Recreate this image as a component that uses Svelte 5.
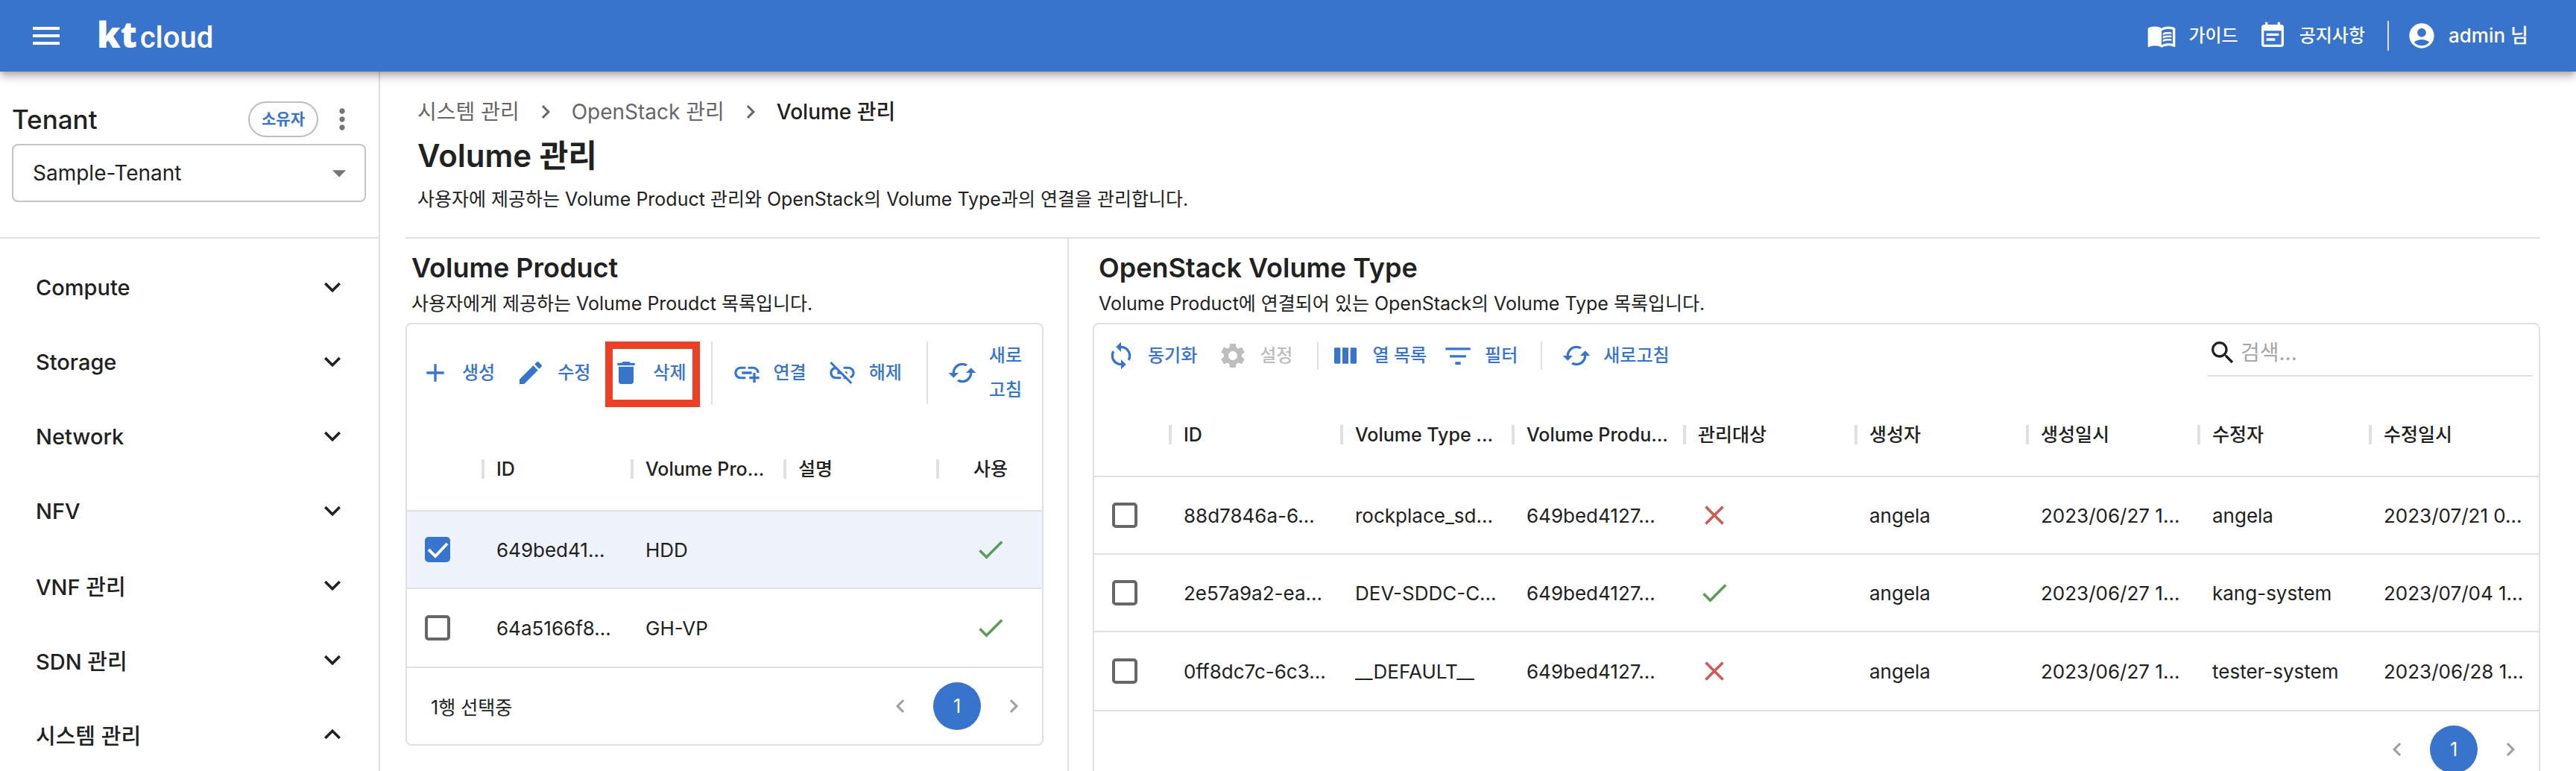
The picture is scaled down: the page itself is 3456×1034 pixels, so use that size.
<script>
  const paths = {
    menu: 'M3 18h18v-2H3v2zm0-5h18v-2H3v2zm0-7v2h18V6H3z',
    book: 'M21 5c-1.11-.35-2.33-.5-3.5-.5-1.95 0-4.05.4-5.5 1.5-1.45-1.1-3.55-1.5-5.5-1.5S2.45 4.9 1 6v14.65c0 .25.25.5.5.5.1 0 .15-.05.25-.05C3.1 20.45 5.05 20 6.5 20c1.95 0 4.05.4 5.5 1.5 1.35-.85 3.8-1.5 5.5-1.5 1.65 0 3.35.3 4.75 1.05.1.05.15.05.25.05.25 0 .5-.25.5-.5V6c-.6-.45-1.25-.75-2-1zm0 13.5c-1.1-.35-2.3-.5-3.5-.5-1.7 0-4.15.65-5.5 1.5V8c1.35-.85 3.8-1.5 5.5-1.5 1.2 0 2.4.15 3.5.5v11.5zM17.5 10.5c.88 0 1.73.09 2.5.26V9.24c-.79-.15-1.64-.24-2.5-.24-1.7 0-3.24.29-4.5.83v1.66c1.13-.64 2.7-.99 4.5-.99zM13 12.49v1.66c1.13-.64 2.7-.99 4.5-.99.88 0 1.73.09 2.5.26V11.9c-.79-.15-1.64-.24-2.5-.24-1.7 0-3.24.3-4.5.83zM17.5 14.33c-1.7 0-3.24.29-4.5.83v1.66c1.13-.64 2.7-.99 4.5-.99.88 0 1.73.09 2.5.26v-1.52c-.79-.16-1.64-.24-2.5-.24z',
    note: 'M17 10H7v2h10v-2zm2-7h-1V1h-2v2H8V1H6v2H5c-1.11 0-1.99.9-1.99 2L3 19c0 1.1.89 2 2 2h14c1.1 0 2-.9 2-2V5c0-1.1-.9-2-2-2zm0 16H5V8h14v11zm-5-5H7v2h7v-2z',
    account: 'M12 2C6.48 2 2 6.48 2 12s4.48 10 10 10 10-4.48 10-10S17.52 2 12 2zm0 4c1.93 0 3.5 1.57 3.5 3.5S13.93 13 12 13s-3.5-1.57-3.5-3.5S10.07 6 12 6zm0 14c-2.03 0-4.43-.82-6.14-2.88C7.55 15.8 9.68 15 12 15s4.45.8 6.14 2.12C16.43 19.18 14.03 20 12 20z',
    add: 'M19 13h-6v6h-2v-6H5v-2h6V5h2v6h6v2z',
    edit: 'M3 17.25V21h3.75L17.81 9.94l-3.75-3.75L3 17.25zM20.71 7.04c.39-.39.39-1.02 0-1.41l-2.34-2.34c-.39-.39-1.02-.39-1.41 0l-1.83 1.83 3.75 3.75 1.83-1.83z',
    trash: 'M6 19c0 1.1.9 2 2 2h8c1.1 0 2-.9 2-2V7H6v12zM19 4h-3.5l-1-1h-5l-1 1H5v2h14V4z',
    link: 'M8 11h8v2H8v-2zm12.1 1H22c0-2.76-2.24-5-5-5h-4v1.9h4c1.71 0 3.1 1.39 3.1 3.1zM3.9 12c0-1.71 1.39-3.1 3.1-3.1h4V7H7c-2.76 0-5 2.24-5 5s2.24 5 5 5h4v-1.9H7c-1.71 0-3.1-1.39-3.1-3.1zM19 12h-2v3h-3v2h3v3h2v-3h3v-2h-3v-3z',
    unlink: 'M17 7h-4v1.9h4c1.71 0 3.1 1.39 3.1 3.1 0 1.43-.98 2.63-2.31 2.98l1.46 1.46C20.88 15.61 22 13.95 22 12c0-2.76-2.24-5-5-5zm-1 4h-2.19l2 2H16zM2 4.27l3.11 3.11C3.29 8.12 2 9.91 2 12c0 2.76 2.24 5 5 5h4v-1.9H7c-1.71 0-3.1-1.39-3.1-3.1 0-1.59 1.21-2.9 2.76-3.07L8.73 11H8v2h2.73L13 15.27V17h1.73l4.01 4L20 19.74 3.27 3 2 4.27z',
    refresh: 'M19 8l-4 4h3c0 3.31-2.69 6-6 6-1.01 0-1.97-.25-2.8-.7l-1.46 1.46C8.97 19.54 10.43 20 12 20c4.42 0 8-3.58 8-8h3l-4-4zM6 12c0-3.31 2.69-6 6-6 1.01 0 1.97.25 2.8.7l1.46-1.46C15.03 4.46 13.57 4 12 4c-4.42 0-8 3.58-8 8H1l4 4 4-4H6z',
    sync: 'M12 4V1L8 5l4 4V6c3.31 0 6 2.69 6 6 0 1.01-.25 1.97-.7 2.8l1.46 1.46C19.54 15.03 20 13.57 20 12c0-4.42-3.58-8-8-8zm0 14c-3.31 0-6-2.69-6-6 0-1.01.25-1.97.7-2.8L5.24 7.74C4.46 8.97 4 10.43 4 12c0 4.42 3.58 8 8 8v3l4-4-4-4v3z',
    gear: 'M19.14 12.94c.04-.3.06-.61.06-.94 0-.32-.02-.64-.07-.94l2.03-1.58c.18-.14.23-.41.12-.61l-1.92-3.32c-.12-.22-.37-.29-.59-.22l-2.39.96c-.5-.38-1.03-.7-1.62-.94l-.36-2.54c-.04-.24-.24-.41-.48-.41h-3.84c-.24 0-.43.17-.47.41l-.36 2.54c-.59.24-1.13.57-1.62.94l-2.39-.96c-.22-.08-.47 0-.59.22L2.74 8.87c-.12.21-.08.47.12.61l2.03 1.58c-.05.3-.09.63-.09.94s.02.64.07.94l-2.03 1.58c-.18.14-.23.41-.12.61l1.92 3.32c.12.22.37.29.59.22l2.39-.96c.5.38 1.03.7 1.62.94l.36 2.54c.05.24.24.41.48.41h3.84c.24 0 .44-.17.47-.41l.36-2.54c.59-.24 1.13-.56 1.62-.94l2.39.96c.22.08.47 0 .59-.22l1.92-3.32c.12-.22.07-.47-.12-.61l-2.01-1.58zM12 15.6c-1.98 0-3.6-1.62-3.6-3.6s1.62-3.6 3.6-3.6 3.6 1.62 3.6 3.6-1.62 3.6-3.6 3.6z',
    columns: 'M3.8 5.6h3.4a.8.8 0 0 1 .8.8v11.2a.8.8 0 0 1-.8.8H3.8a.8.8 0 0 1-.8-.8V6.4a.8.8 0 0 1 .8-.8zM9.6 5.6h4.8v12.8H9.6zM16.8 5.6h3.4a.8.8 0 0 1 .8.8v11.2a.8.8 0 0 1-.8.8h-3.4a.8.8 0 0 1-.8-.8V6.4a.8.8 0 0 1 .8-.8z',
    filter: 'M2 5.5h20v2H2zM5.5 11.5h13v2h-13zM9.8 17h4.4v2.2H9.8z',
    search: 'M15.5 14h-.79l-.28-.27C15.41 12.59 16 11.11 16 9.5 16 5.91 13.09 3 9.5 3S3 5.91 3 9.5 5.91 16 9.5 16c1.61 0 3.09-.59 4.23-1.57l.27.28v.79l5 4.99L20.49 19l-4.99-5zm-6 0C7.01 14 5 11.99 5 9.5S7.01 5 9.5 5 14 7.01 14 9.5 11.99 14 9.5 14z',
    down: 'M7.41 8.59 12 13.17l4.59-4.58L18 10l-6 6-6-6 1.41-1.41z',
    up: 'M7.41 15.41 12 10.83l4.59 4.58L18 14l-6-6-6 6 1.41 1.41z',
    right: 'M10 6 8.59 7.41 13.17 12l-4.58 4.59L10 18l6-6z',
    left: 'M15.41 7.41 14 6l-6 6 6 6 1.41-1.41L10.83 12z',
    caret: 'M7 10l5 5 5-5z',
    more: 'M12 8c1.1 0 2-.9 2-2s-.9-2-2-2-2 .9-2 2 .9 2 2 2zm0 2c-1.1 0-2 .9-2 2s.9 2 2 2 2-.9 2-2-.9-2-2-2zm0 6c-1.1 0-2 .9-2 2s.9 2 2 2 2-.9 2-2-.9-2-2-2z',
    check: 'M9 16.17 4.83 12l-1.42 1.41L9 19 21 7l-1.41-1.41z',
    close: 'M19 6.41 17.59 5 12 10.59 6.41 5 5 6.41 10.59 12 5 17.59 6.41 19 12 13.41 17.59 19 19 17.59 13.41 12z'
  };

  const menus = [
    { label: 'Compute', open: false },
    { label: 'Storage', open: false },
    { label: 'Network', open: false },
    { label: 'NFV', open: false },
    { label: 'VNF 관리', open: false },
    { label: 'SDN 관리', open: false },
    { label: '시스템 관리', open: true }
  ];

  let products = $state([
    { id: '649bed41...', name: 'HDD', used: true, selected: true },
    { id: '64a5166f8...', name: 'GH-VP', used: true, selected: false }
  ]);

  const typeHeads = ['ID', 'Volume Type ...', 'Volume Produ...', '관리대상', '생성자', '생성일시', '수정자', '수정일시'];
  let types = $state([
    { id: '88d7846a-6...', name: 'rockplace_sd...', product: '649bed4127...', managed: false, creator: 'angela', created: '2023/06/27 1...', editor: 'angela', edited: '2023/07/21 0...', selected: false },
    { id: '2e57a9a2-ea...', name: 'DEV-SDDC-C...', product: '649bed4127...', managed: true, creator: 'angela', created: '2023/06/27 1...', editor: 'kang-system', edited: '2023/07/04 1...', selected: false },
    { id: '0ff8dc7c-6c3...', name: '__DEFAULT__', product: '649bed4127...', managed: false, creator: 'angela', created: '2023/06/27 1...', editor: 'tester-system', edited: '2023/06/28 1...', selected: false }
  ]);
</script>

{#snippet icon(name, size = 'm')}
  <svg class="icon {size}" viewBox="0 0 24 24" aria-hidden="true"><path d={paths[name]} /></svg>
{/snippet}

{#snippet tool(name, label, disabled = false)}
  <button class="tool" {disabled}>{@render icon(name)}<span>{label}</span></button>
{/snippet}

{#snippet pager()}
  <nav class="pager" aria-label="페이지">
    <button class="step" aria-label="이전">{@render icon('left', 's')}</button>
    <button class="page" aria-current="page">1</button>
    <button class="step" aria-label="다음">{@render icon('right', 's')}</button>
  </nav>
{/snippet}

{#snippet status(ok)}
  <span class="status" class:ok role="img" aria-label={ok ? '사용' : '미사용'}>{@render icon(ok ? 'check' : 'close', 'l')}</span>
{/snippet}

{#snippet tick(row)}
  <label class="tick">
    <input type="checkbox" bind:checked={row.selected} aria-label={row.id} />
    {#if row.selected}<svg viewBox="0 0 34 34" aria-hidden="true"><path d="M5 17l9 9L30 9" /></svg>{/if}
  </label>
{/snippet}

<div class="app">
  <header>
    <button class="burger" aria-label="메뉴">{@render icon('menu', 'xl')}</button>
    <a class="logo" href="#home"><b>kt</b><span>cloud</span></a>
    <div class="links">
      <a href="#guide">{@render icon('book')}<span>가이드</span></a>
      <a href="#notice">{@render icon('note')}<span>공지사항</span></a>
      <a class="user" href="#account">{@render icon('account')}<span>admin 님</span></a>
    </div>
  </header>

  <div class="body">
    <aside>
      <div class="tenant">
        <div class="tenant-head">
          <label for="tenant">Tenant</label>
          <span class="badge">소유자</span>
          <button class="more" aria-label="더보기">{@render icon('more', 'l')}</button>
        </div>
        <div class="select">
          <select id="tenant"><option>Sample-Tenant</option></select>
          {@render icon('caret', 'l')}
        </div>
      </div>
      <nav class="menu">
        {#each menus as m}
          <button aria-expanded={m.open}><span>{m.label}</span>{@render icon(m.open ? 'up' : 'down', 'l')}</button>
        {/each}
      </nav>
    </aside>

    <main>
      <div class="intro">
        <nav class="crumbs" aria-label="경로">
          <a href="#system">시스템 관리</a>
          {@render icon('right', 's')}
          <a href="#openstack">OpenStack 관리</a>
          {@render icon('right', 's')}
          <span aria-current="page">Volume 관리</span>
        </nav>
        <h1>Volume 관리</h1>
        <p>사용자에 제공하는 Volume Product 관리와 OpenStack의 Volume Type과의 연결을 관리합니다.</p>
      </div>

      <div class="panes">
        <section class="pane">
          <h2>Volume Product</h2>
          <p>사용자에게 제공하는 Volume Proudct 목록입니다.</p>
          <div class="card">
            <div class="toolbar">
              <div class="tools">
                {@render tool('add', '생성')}
                {@render tool('edit', '수정')}
                <div class="marked">{@render tool('trash', '삭제')}</div>
                <i class="rule"></i>
                {@render tool('link', '연결')}
                {@render tool('unlink', '해제')}
                <i class="rule"></i>
                <button class="tool">{@render icon('refresh')}<span>새로<br />고침</span></button>
              </div>
            </div>
            <table>
              <colgroup><col class="c-tick" /><col class="c-id" /><col /><col /><col class="c-use" /></colgroup>
              <thead>
                <tr>
                  <th><div></div></th>
                  <th><div>ID</div></th>
                  <th><div>Volume Pro...</div></th>
                  <th><div>설명</div></th>
                  <th class="mid"><div>사용</div></th>
                </tr>
              </thead>
              <tbody>
                {#each products as p}
                  <tr class:selected={p.selected}>
                    <td class="box">{@render tick(p)}</td>
                    <td>{p.id}</td>
                    <td>{p.name}</td>
                    <td></td>
                    <td class="mid">{@render status(p.used)}</td>
                  </tr>
                {/each}
              </tbody>
            </table>
            <footer><span>1행 선택중</span>{@render pager()}</footer>
          </div>
        </section>

        <section class="pane">
          <h2>OpenStack Volume Type</h2>
          <p>Volume Product에 연결되어 있는 OpenStack의 Volume Type 목록입니다.</p>
          <div class="card">
            <div class="toolbar wide">
              <div class="tools">
                {@render tool('sync', '동기화')}
                {@render tool('gear', '설정', true)}
                <i class="rule"></i>
                <div class="grid-tools">
                  {@render tool('columns', '열 목록')}
                  {@render tool('filter', '필터')}
                </div>
                <i class="rule"></i>
                {@render tool('refresh', '새로고침')}
              </div>
              <label class="search">
                {@render icon('search')}
                <input type="search" placeholder="검색..." aria-label="검색" />
              </label>
            </div>
            <table>
              <colgroup><col class="c-tick" />{#each typeHeads as _, i}<col class:c-data={i < typeHeads.length - 1} />{/each}</colgroup>
              <thead>
                <tr>
                  <th><div></div></th>
                  {#each typeHeads as h}<th><div>{h}</div></th>{/each}
                </tr>
              </thead>
              <tbody>
                {#each types as t}
                  <tr class:selected={t.selected}>
                    <td class="box">{@render tick(t)}</td>
                    <td>{t.id}</td>
                    <td>{t.name}</td>
                    <td>{t.product}</td>
                    <td>{@render status(t.managed)}</td>
                    <td>{t.creator}</td>
                    <td>{t.created}</td>
                    <td>{t.editor}</td>
                    <td>{t.edited}</td>
                  </tr>
                {/each}
              </tbody>
            </table>
            <footer>{@render pager()}</footer>
          </div>
        </section>
      </div>
    </main>
  </div>
</div>

<style>
  :global(body) { overflow: hidden; background: #fff; }

  .app {
    --blue: #3874cb;
    --line: #e0e0e0;
    display: flex;
    flex-direction: column;
    height: 100vh;
    color: #212121;
    font-family: Inter, "Noto Sans CJK KR", sans-serif;
    font-size: 26px;
  }
  .app * { box-sizing: border-box; }
  button, input, select { font: inherit; color: inherit; background: none; border: 0; padding: 0; margin: 0; }
  a { color: inherit; text-decoration: none; }
  h1, h2, p { margin: 0; }

  .icon { display: block; flex: none; fill: currentColor; }
  .icon.s { width: 36px; height: 36px; }
  .icon.m { width: 40px; height: 40px; }
  .icon.l { width: 44px; height: 44px; }
  .icon.xl { width: 48px; height: 48px; }

  header {
    position: relative;
    z-index: 1;
    flex: none;
    display: flex;
    align-items: center;
    height: 96px;
    padding: 0 64px 0 38px;
    background: var(--blue);
    color: #fff;
    box-shadow: 0 4px 8px -2px rgba(0, 0, 0, .2), 0 8px 10px rgba(0, 0, 0, .14), 0 2px 20px rgba(0, 0, 0, .12);
  }
  .logo { display: flex; align-items: baseline; gap: 4px; margin-left: 44px; font-family: "Open Sans", sans-serif; line-height: 56px; }
  .logo b { font-size: 48px; font-weight: 800; }
  .logo span { font-family: Roboto, sans-serif; font-size: 40px; font-weight: 500; }
  .links { display: flex; align-items: center; gap: 26px; margin-left: auto; }
  .links a { display: flex; align-items: center; gap: 16px; font-size: 24px; font-weight: 500; line-height: 38px; }
  .links .user { padding-left: 24px; margin-left: 4px; border-left: 2px solid var(--line); font-size: 26px; }

  .body { flex: 1; display: flex; min-height: 0; }
  aside { flex: none; width: 510px; border-right: 2px solid var(--line); overflow: hidden; }
  .tenant { padding: 40px 17px 47px 16px; border-bottom: 2px solid var(--line); }
  .tenant-head { display: flex; align-items: center; height: 48px; margin-bottom: 9px; }
  .tenant-head label { margin-right: auto; font-size: 35px; font-weight: 500; }
  .badge { padding: 0 16px; border: 2px solid #bdbdbd; border-radius: 24px; color: var(--blue); font-size: 21px; font-weight: 600; line-height: 44px; }
  .more { margin-left: 10px; margin-right: 10px; color: #757575; }
  .select { display: grid; align-items: center; }
  .select > select, .select > .icon { grid-area: 1 / 1; }
  .select select { appearance: none; height: 78px; padding: 0 26px; border: 2px solid #c4c4c4; border-radius: 8px; font-size: 28px; }
  .select .icon { justify-self: end; margin-right: 14px; color: #757575; pointer-events: none; }
  .menu { padding-top: 15px; }
  .menu button { display: flex; align-items: center; justify-content: space-between; width: 100%; height: 100px; padding: 0 40px 0 48px; font-size: 29px; font-weight: 500; }

  main { flex: 1; min-width: 0; display: flex; flex-direction: column; padding: 0 48px 0 34px; overflow: hidden; }
  .intro { flex: none; padding: 34px 16px 32px; border-bottom: 2px solid var(--line); }
  .crumbs { display: flex; align-items: center; gap: 17px; font-size: 28px; line-height: 40px; color: #666; }
  .crumbs span { color: #212121; font-weight: 500; }
  h1 { margin: 12px 0; font-size: 42px; font-weight: 600; line-height: 54px; }
  .intro p, .pane p { font-size: 25px; line-height: 38px; }

  .panes { flex: 1; display: grid; grid-template-columns: 890fr 1974fr; }
  .pane { min-width: 0; padding-top: 17px; }
  .pane:first-child { padding-right: 32px; border-right: 2px solid var(--line); }
  .pane:last-child { padding-left: 32px; }
  h2 { padding-left: 8px; margin-bottom: 8px; font-size: 36px; font-weight: 600; line-height: 44px; }
  .pane p { padding-left: 8px; margin-bottom: 8px; line-height: 36px; }

  .card { border: 2px solid var(--line); border-radius: 8px; }
  .toolbar { display: flex; align-items: flex-start; justify-content: space-between; padding: 8px; }
  .toolbar.wide { padding-left: 6px; }
  .tools { display: flex; align-items: stretch; gap: 8px; padding: 11px 0 18px; color: var(--blue); }
  .grid-tools { display: flex; gap: 6px; margin-left: -8px; }
  .tool { display: flex; align-items: center; gap: 16px; padding: 0 10px; font-size: 24px; font-weight: 500; line-height: 46px; white-space: nowrap; cursor: pointer; }
  .grid-tools .tool { padding: 0 8px; }
  .tool:disabled { color: #bdbdbd; }
  .rule { width: 2px; margin: 4px 8px 4px 15px; background: var(--line); }
  .marked { position: relative; display: flex; }
  .marked::after { content: ""; position: absolute; inset: 4px -8px 0 2px; border: 10px solid #eb4025; pointer-events: none; }
  .search { display: flex; align-items: center; gap: 4px; width: 436px; height: 62px; border-bottom: 2px solid var(--line); font-size: 28px; }
  .search input { flex: 1; min-width: 0; outline: 0; appearance: none; }
  .search input::placeholder { color: #a6a6a6; opacity: 1; }

  table { width: 100%; table-layout: fixed; border-collapse: separate; border-spacing: 0; }
  .c-tick { width: 104px; }
  .c-id { width: 200px; }
  .c-use { width: 138px; }
  .c-data { width: 230px; }
  th { height: 114px; padding: 2px 0 0; border-bottom: 2px solid var(--line); font-size: 25px; font-weight: 500; text-align: left; }
  th div { height: 26px; padding-left: 16px; border-right: 4px solid var(--line); line-height: 26px; white-space: nowrap; }
  th:last-child div { border-right: 0; }
  th.mid div { padding-left: 0; }
  .mid { text-align: center; }
  td { height: 104px; padding: 0 0 0 16px; border-bottom: 2px solid var(--line); white-space: nowrap; }
  tr:last-child td { border-bottom: 0; }
  td.box { padding-left: 24px; }
  td.mid { padding: 0; }
  tr.selected { background: #eef3fb; }
  .tick { display: grid; width: 34px; height: 34px; }
  .tick input, .tick svg { grid-area: 1 / 1; width: 34px; height: 34px; }
  .tick input { appearance: none; border: 4px solid #666; border-radius: 5px; }
  .tick input:checked { border-color: var(--blue); background: var(--blue); }
  .tick svg { fill: none; stroke: #fff; stroke-width: 4; pointer-events: none; }
  .status { display: inline-block; vertical-align: middle; color: #d15a55; }
  .status.ok { color: #5f9a5b; }

  th.mid { text-align: center; }
  footer { display: flex; align-items: center; height: 104px; padding: 0 20px 0 32px; border-top: 2px solid var(--line); font-size: 25px; }
  .pager { display: flex; align-items: center; gap: 26px; margin-left: auto; }
  .step { color: #9e9e9e; }
  .page { width: 64px; height: 64px; border-radius: 50%; background: var(--blue); color: #fff; }
</style>
